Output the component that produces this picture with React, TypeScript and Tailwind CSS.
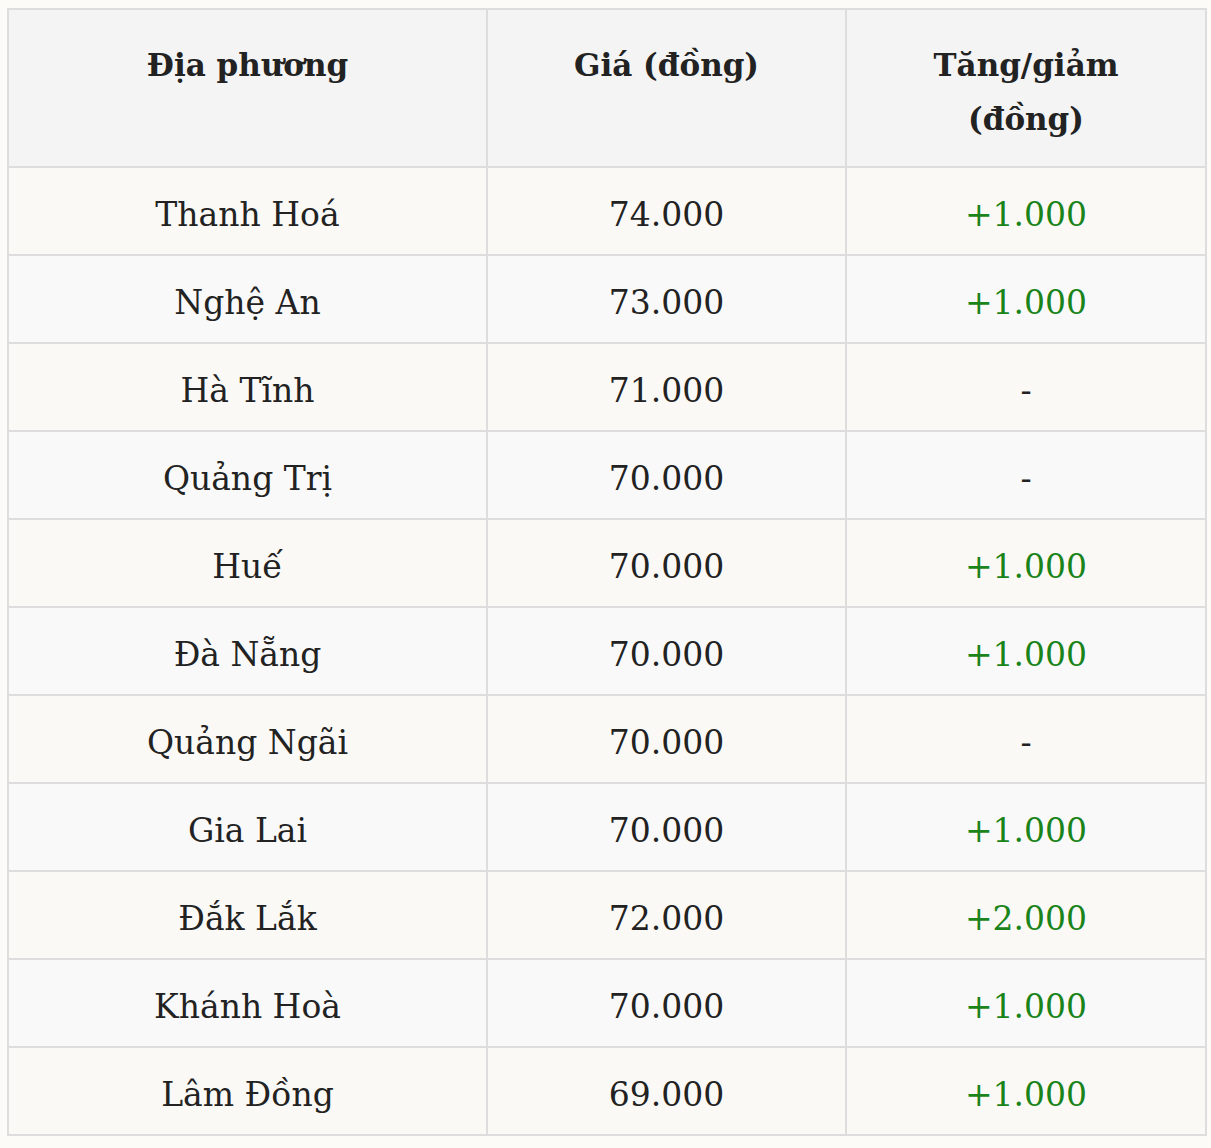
const ROWS = [
  { place: 'Thanh Hoá', price: '74.000', change: '+1.000' },
  { place: 'Nghệ An', price: '73.000', change: '+1.000' },
  { place: 'Hà Tĩnh', price: '71.000', change: '-' },
  { place: 'Quảng Trị', price: '70.000', change: '-' },
  { place: 'Huế', price: '70.000', change: '+1.000' },
  { place: 'Đà Nẵng', price: '70.000', change: '+1.000' },
  { place: 'Quảng Ngãi', price: '70.000', change: '-' },
  { place: 'Gia Lai', price: '70.000', change: '+1.000' },
  { place: 'Đắk Lắk', price: '72.000', change: '+2.000' },
  { place: 'Khánh Hoà', price: '70.000', change: '+1.000' },
  { place: 'Lâm Đồng', price: '69.000', change: '+1.000' },
]

export default function App() {
  return (
    <div className="min-h-[1148px] bg-[#fcfbf8] px-[7px] pt-[8px] font-['DejaVu_Serif',serif] text-[#222]">
      <table className="w-[1198px] table-fixed border-collapse border-2 border-[#dddddd]">
        <colgroup>
          <col className="w-[479px]" />
          <col className="w-[359px]" />
          <col className="w-[360px]" />
        </colgroup>
        <thead>
          <tr className="h-[155px] bg-[#f4f4f4]">
            {['Địa phương', 'Giá (đồng)', 'Tăng/giảm (đồng)'].map((label) => (
              <th
                key={label}
                className="border-2 border-[#dddddd] px-[60px] pt-[28px] pb-[20px] align-top text-[31px] leading-[54px] font-bold"
              >
                {label}
              </th>
            ))}
          </tr>
        </thead>
        <tbody>
          {ROWS.map((row, i) => (
            <tr
              key={row.place}
              className={`h-[88px] ${i % 2 === 0 ? 'bg-[#fbf9f6]' : 'bg-[#f9f9f9]'}`}
            >
              <td className="border-2 border-[#dddddd] pt-[8px] text-center align-middle text-[33px] leading-[54px]">
                {row.place}
              </td>
              <td className="border-2 border-[#dddddd] pt-[8px] text-center align-middle text-[33px] leading-[54px]">
                {row.price}
              </td>
              <td
                className={`border-2 border-[#dddddd] pt-[8px] text-center align-middle text-[33px] leading-[54px] ${
                  row.change === '-' ? 'text-[#222]' : 'text-[#1a841a]'
                }`}
              >
                {row.change}
              </td>
            </tr>
          ))}
        </tbody>
      </table>
    </div>
  )
}
